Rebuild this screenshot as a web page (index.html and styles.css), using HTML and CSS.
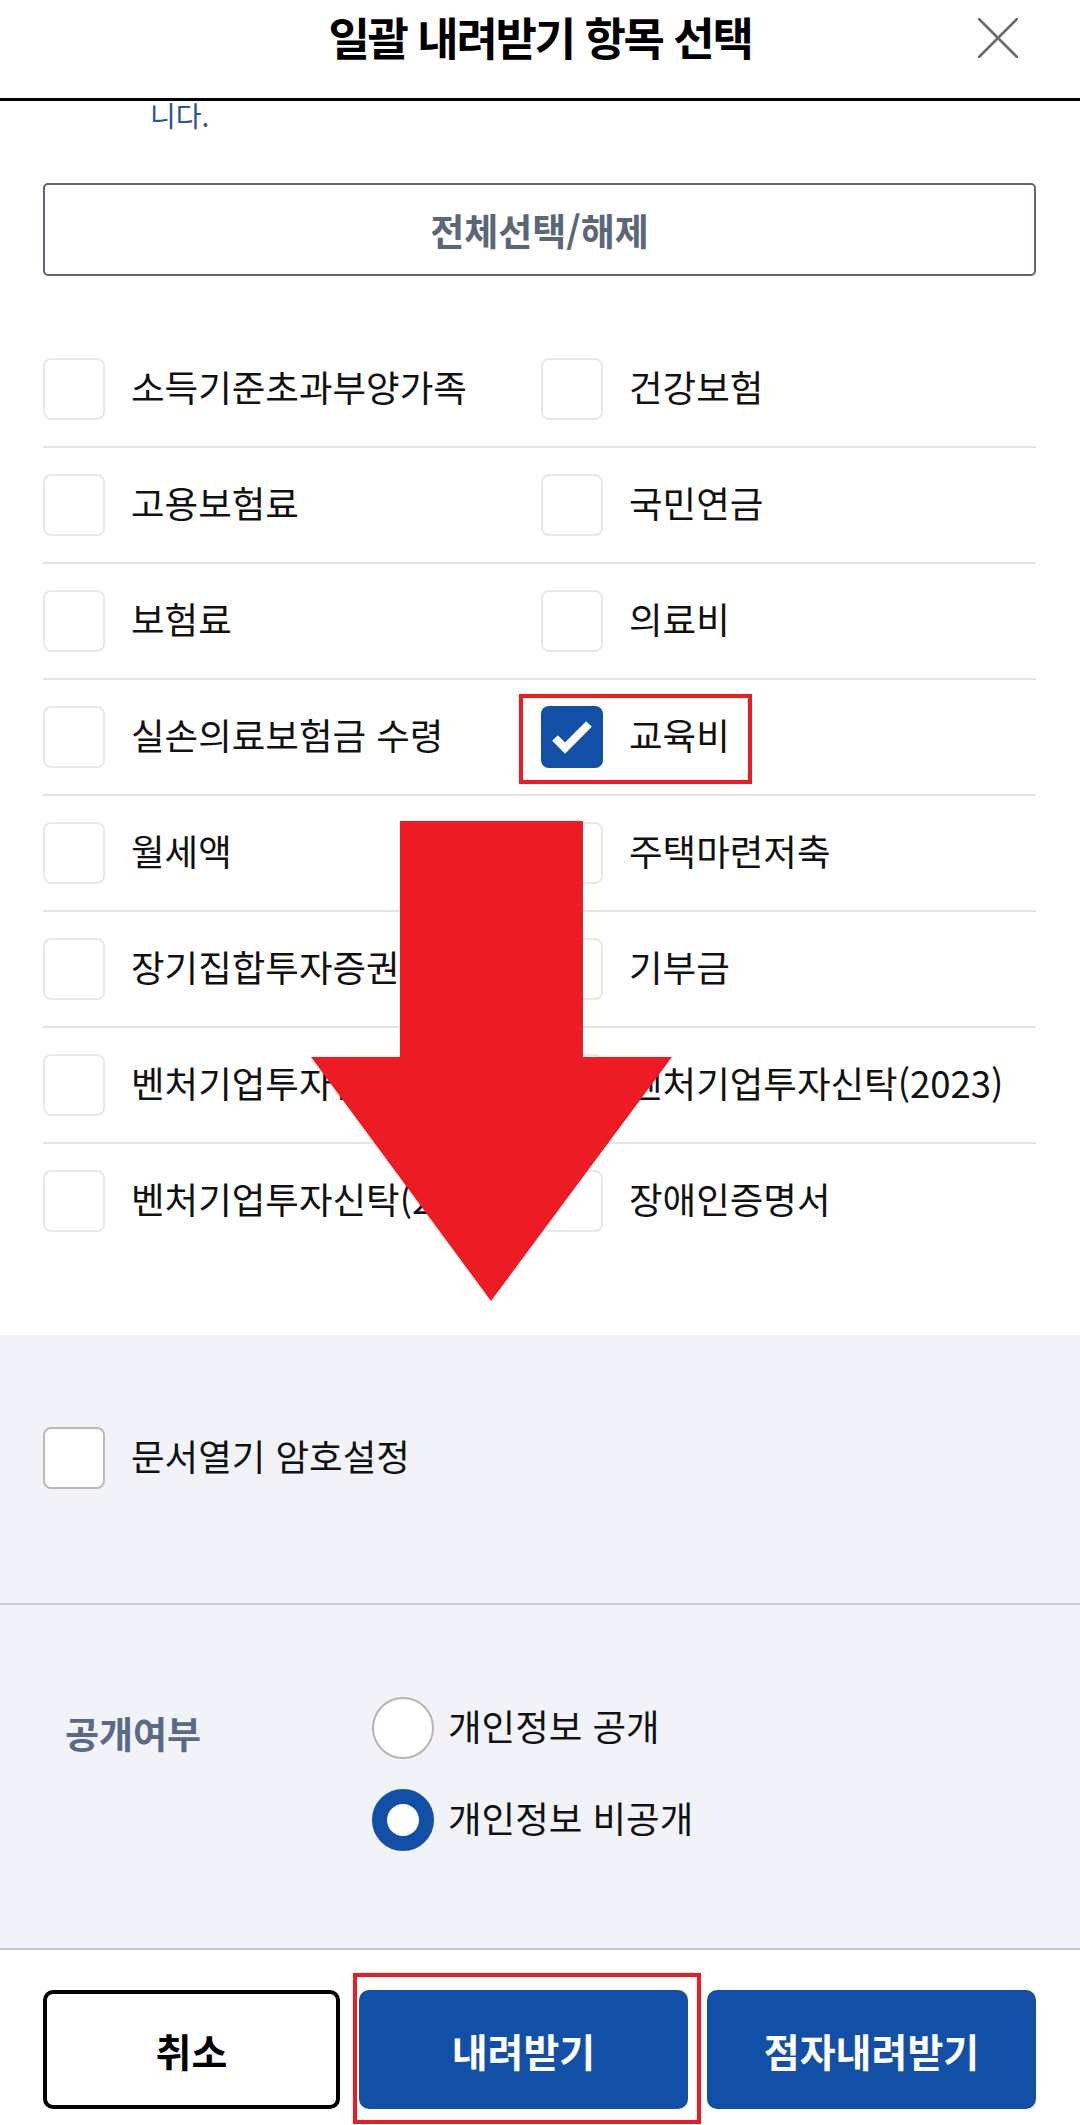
FILE: index.html
```html
<!DOCTYPE html>
<html lang="ko">
<head>
    <meta charset="UTF-8" />
    <title>일괄 내려받기 항목 선택</title>
    <link rel="stylesheet" href="styles.css">
</head>
<body>
    <div class="sheet">
        <header class="sheet-header">
            <span></span>
            <h1 class="sheet-title">일괄 내려받기 항목 선택</h1>
            <button class="close-btn" type="button" aria-label="닫기">
                <svg width="40" height="40" viewBox="0 0 40 40">
                    <path d="M1 1 L39 39 M39 1 L1 39" stroke="#6b6b6b" stroke-width="2.6" stroke-linecap="round" fill="none" />
                </svg>
            </button>
        </header>

        <div class="sheet-body">
            <p class="notice">니다.</p>
            <button class="select-all-btn" type="button">전체선택/해제</button>

            <ul class="item-list">
                <li class="item-row">
                    <span class="item"><span class="check"></span><span class="item-label">소득기준초과부양가족</span></span>
                    <span class="item"><span class="check"></span><span class="item-label">건강보험</span></span>
                </li>
                <li class="item-row">
                    <span class="item"><span class="check"></span><span class="item-label">고용보험료</span></span>
                    <span class="item"><span class="check"></span><span class="item-label">국민연금</span></span>
                </li>
                <li class="item-row">
                    <span class="item"><span class="check"></span><span class="item-label">보험료</span></span>
                    <span class="item"><span class="check"></span><span class="item-label">의료비</span></span>
                </li>
                <li class="item-row">
                    <span class="item"><span class="check"></span><span class="item-label">실손의료보험금 수령</span></span>
                    <span class="item is-marked">
                        <span class="check is-checked">
                            <svg width="62" height="62" viewBox="0 0 62 62">
                                <polyline points="14,32 24,42 48,18" fill="none" stroke="#fff" stroke-width="8" />
                            </svg>
                        </span>
                        <span class="item-label">교육비</span>
                    </span>
                </li>
                <li class="item-row">
                    <span class="item"><span class="check"></span><span class="item-label">월세액</span></span>
                    <span class="item"><span class="check"></span><span class="item-label">주택마련저축</span></span>
                </li>
                <li class="item-row">
                    <span class="item"><span class="check"></span><span class="item-label">장기집합투자증권저축</span></span>
                    <span class="item"><span class="check"></span><span class="item-label">기부금</span></span>
                </li>
                <li class="item-row">
                    <span class="item"><span class="check"></span><span class="item-label">벤처기업투자신탁(2021)</span></span>
                    <span class="item"><span class="check"></span><span class="item-label">벤처기업투자신탁(2023)</span></span>
                </li>
                <li class="item-row">
                    <span class="item"><span class="check"></span><span class="item-label">벤처기업투자신탁(2022)</span></span>
                    <span class="item"><span class="check"></span><span class="item-label">장애인증명서</span></span>
                </li>
            </ul>
        </div>

        <div class="options">
            <div class="password-row">
                <span class="item"><span class="check check-strong"></span><span class="item-label">문서열기 암호설정</span></span>
            </div>
            <div class="public-row">
                <div class="public-label">공개여부</div>
                <div class="radio-group">
                    <span class="radio-option"><span class="radio"></span><span class="item-label">개인정보 공개</span></span>
                    <span class="radio-option"><span class="radio is-selected"></span><span class="item-label">개인정보 비공개</span></span>
                </div>
            </div>
        </div>

        <div class="sheet-footer">
            <button class="btn btn-cancel" type="button">취소</button>
            <button class="btn btn-primary is-marked" type="button">내려받기</button>
            <button class="btn btn-primary" type="button">점자내려받기</button>
        </div>
    </div>

    <!-- 안내용 화살표 -->
    <svg class="guide-arrow" width="361" height="480" viewBox="0 0 361 480">
        <polygon points="89,0 272,0 272,236 361,236 180,480 0,236 89,236" fill="#ed1c24" />
    </svg>
</body>
</html>
```

FILE: styles.css
```css
* {
    box-sizing: border-box;
}
body {
    margin: 0;
    width: 1080px;
    height: 2125px;
    overflow: hidden;
    position: relative;
    background: #fff;
    color: #111;
    font-family: "Noto Sans CJK KR", "Noto Sans", sans-serif;
}
button {
    font-family: inherit;
    cursor: pointer;
}
.sheet-header {
    display: grid;
    grid-template-columns: 1fr auto 1fr;
    align-items: start;
    height: 101px;
    padding-top: 14px;
    border-bottom: 3px solid #000;
}
.sheet-title {
    margin: 0;
    font-size: 45px;
    font-weight: 700;
    line-height: 45px;
    letter-spacing: -2.2px;
    color: #000;
}
.close-btn {
    justify-self: end;
    margin: 4px 62px 0 0;
    width: 40px;
    height: 40px;
    padding: 0;
    border: none;
    background: none;
}
.close-btn svg {
    display: block;
}
.sheet-body {
    padding: 0 44px 77px 43px;
}
.notice {
    margin: 0;
    padding-left: 107px;
    font-size: 28px;
    line-height: 28px;
    color: #2b5597;
}
.select-all-btn {
    display: block;
    width: 100%;
    height: 93px;
    margin-top: 54px;
    border: 2px solid #5b6677;
    border-radius: 5px;
    background: #fff;
    color: #5b6677;
    font-size: 37px;
    font-weight: 700;
}
.item-list {
    list-style: none;
    margin: 56px 0 0;
    padding: 0;
}
.item-row {
    display: grid;
    grid-template-columns: 498px 1fr;
    align-items: center;
    height: 116px;
    border-bottom: 2px solid #e3e3e8;
}
.item-row:last-child {
    border-bottom: none;
    height: 114px;
}
.item {
    display: flex;
    align-items: center;
    gap: 26px;
    position: relative;
    white-space: nowrap;
    justify-self: start;
}
.item-label {
    font-size: 36.5px;
    line-height: 1.2;
    padding-bottom: 4px;
}
.check {
    flex: none;
    width: 62px;
    height: 62px;
    border: 2px solid #e8e8ec;
    border-radius: 8px;
    background: #fff;
}
.check.is-checked {
    border: none;
    background: #1250a8;
}
.check.is-checked svg {
    display: block;
}
.check-strong {
    border-color: #b9b9be;
}
/* 빨간 강조 테두리 */
.is-marked {
    position: relative;
}
.is-marked::after {
    content: "";
    position: absolute;
    border: 4px solid #ed1c24;
    pointer-events: none;
}
.item.is-marked::after {
    inset: -12px -22px -16px -22px;
}
.btn.is-marked::after {
    inset: -17px -13px -15px -6px;
}
.options {
    background: #f1f3f8;
}
.password-row {
    padding: 92px 43px 114px;
    border-bottom: 2px solid #c8cdd9;
}
.public-row {
    display: grid;
    grid-template-columns: 307px 1fr;
    padding: 92px 43px 97px 65px;
    border-bottom: 2px solid #c5cad8;
}
.public-label {
    margin-top: 6px;
    font-size: 37px;
    font-weight: 700;
    line-height: 61px;
    color: #5a6a86;
}
.radio-group {
    display: flex;
    flex-direction: column;
    gap: 30px;
}
.radio-option {
    display: flex;
    align-items: center;
    gap: 14px;
}
.radio {
    flex: none;
    width: 62px;
    height: 62px;
    border: 2px solid #b5b5b8;
    border-radius: 50%;
    background: #fff;
}
.radio.is-selected {
    border: 15px solid #1250a8;
}
.sheet-footer {
    display: grid;
    grid-template-columns: 297px 1fr 1fr;
    gap: 19px;
    padding: 40px 44px 0 43px;
}
.btn {
    height: 119px;
    border-radius: 10px;
    font-size: 39px;
    font-weight: 700;
}
.btn-cancel {
    border: 4px solid #000;
    background: #fff;
    color: #000;
}
.btn-primary {
    border: none;
    background: #1250a8;
    color: #fff;
}
.guide-arrow {
    position: absolute;
    left: 311px;
    top: 821px;
}
```
